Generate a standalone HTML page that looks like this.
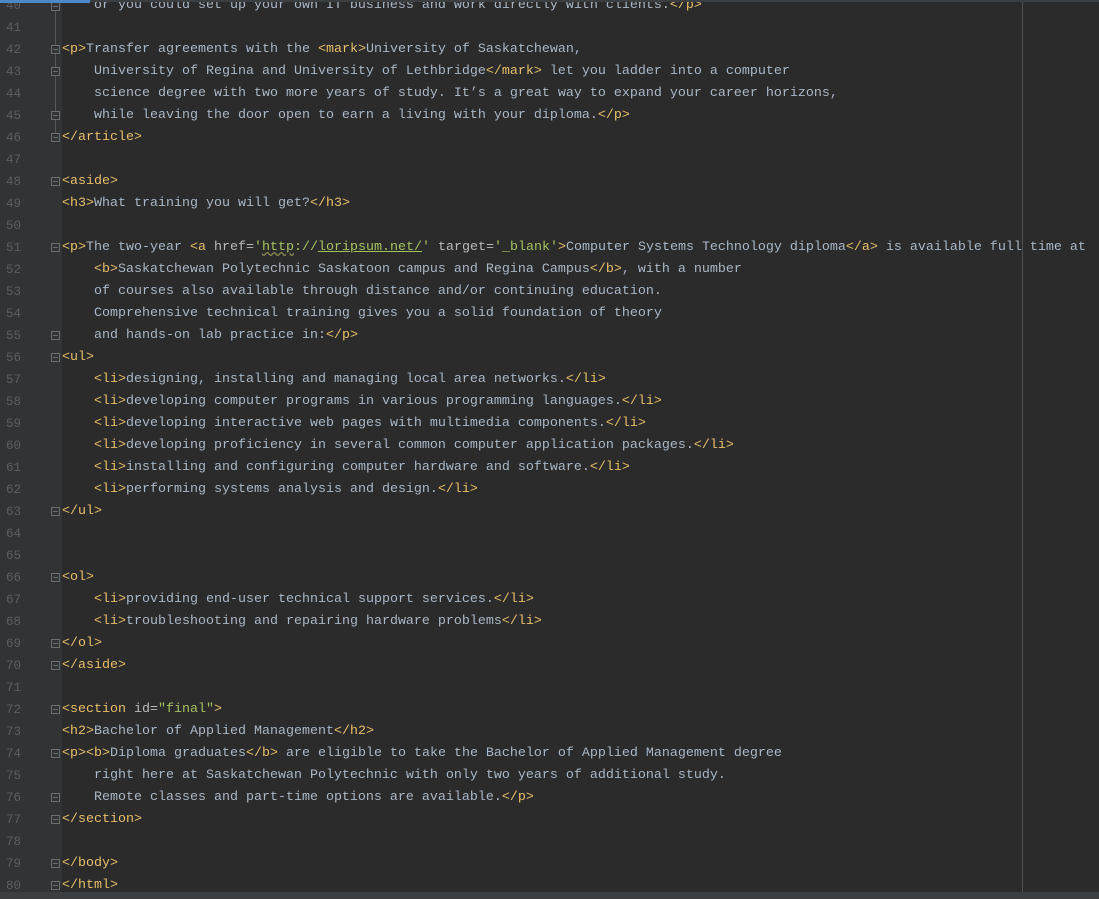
<!DOCTYPE html>
<html><head><meta charset="utf-8"><style>
html,body{margin:0;padding:0;}
body{width:1099px;height:899px;background:#2b2b2b;position:relative;overflow:hidden;font-family:"Liberation Mono",monospace;font-size:13.33px;}
.gutter{position:absolute;left:0;top:0;width:62px;height:892px;background:#313335;}
.topbar{position:absolute;left:0;top:0;width:90px;height:3px;background:#4a88c7;}
.topbar2{position:absolute;left:90px;top:0;width:1009px;height:2px;background:#3c3f41;}
.margin{position:absolute;left:1022px;top:0;width:1px;height:892px;background:#4e5254;}
.bottom{position:absolute;left:0;top:892px;width:1099px;height:7px;background:#3c3f41;}
.nums{position:absolute;left:0;top:-5px;width:40px;color:#5c5f62;line-height:22px;font-size:12.5px;}
.nums div{height:22px;padding-left:6px;}
.code{position:absolute;left:62px;top:-5px;line-height:22px;color:#a9b7c6;}
.code div{height:22px;white-space:pre;}
.t{color:#e8bf6a}.a{color:#bababa}.v{color:#a5c261}.u{text-decoration:underline;text-decoration-style:wavy;text-decoration-color:#8a8a55}
.f{position:absolute;left:51px;width:9px;height:9px;box-sizing:border-box;border:1px solid #6b6e70;background:#313335;margin-top:2px;}
.f::after{content:"";position:absolute;left:1px;top:3px;width:5px;height:1px;background:#6b6e70;}
</style></head><body>
<div class="gutter"></div>
<div class="margin"></div>
<div class="nums"><div>40</div><div>41</div><div>42</div><div>43</div><div>44</div><div>45</div><div>46</div><div>47</div><div>48</div><div>49</div><div>50</div><div>51</div><div>52</div><div>53</div><div>54</div><div>55</div><div>56</div><div>57</div><div>58</div><div>59</div><div>60</div><div>61</div><div>62</div><div>63</div><div>64</div><div>65</div><div>66</div><div>67</div><div>68</div><div>69</div><div>70</div><div>71</div><div>72</div><div>73</div><div>74</div><div>75</div><div>76</div><div>77</div><div>78</div><div>79</div><div>80</div></div>
<div class="code"><div>    or you could set up your own IT business and work directly with clients.<span class="t">&lt;/p&gt;</span></div><div></div><div><span class="t">&lt;p&gt;</span>Transfer agreements with the <span class="t">&lt;mark&gt;</span>University of Saskatchewan,</div><div>    University of Regina and University of Lethbridge<span class="t">&lt;/mark&gt;</span> let you ladder into a computer</div><div>    science degree with two more years of study. It’s a great way to expand your career horizons,</div><div>    while leaving the door open to earn a living with your diploma.<span class="t">&lt;/p&gt;</span></div><div><span class="t">&lt;/article&gt;</span></div><div></div><div><span class="t">&lt;aside&gt;</span></div><div><span class="t">&lt;h3&gt;</span>What training you will get?<span class="t">&lt;/h3&gt;</span></div><div></div><div><span class="t">&lt;p&gt;</span>The two-year <span class="t">&lt;a </span><span class="a">href=</span><span class="v">'<span class="u">http</span>://<span style="text-decoration:underline">loripsum.net/</span>'</span> <span class="a">target=</span><span class="v">'_blank'</span><span class="t">&gt;</span>Computer Systems Technology diploma<span class="t">&lt;/a&gt;</span> is available full time at</div><div>    <span class="t">&lt;b&gt;</span>Saskatchewan Polytechnic Saskatoon campus and Regina Campus<span class="t">&lt;/b&gt;</span>, with a number</div><div>    of courses also available through distance and/or continuing education.</div><div>    Comprehensive technical training gives you a solid foundation of theory</div><div>    and hands-on lab practice in:<span class="t">&lt;/p&gt;</span></div><div><span class="t">&lt;ul&gt;</span></div><div>    <span class="t">&lt;li&gt;</span>designing, installing and managing local area networks.<span class="t">&lt;/li&gt;</span></div><div>    <span class="t">&lt;li&gt;</span>developing computer programs in various programming languages.<span class="t">&lt;/li&gt;</span></div><div>    <span class="t">&lt;li&gt;</span>developing interactive web pages with multimedia components.<span class="t">&lt;/li&gt;</span></div><div>    <span class="t">&lt;li&gt;</span>developing proficiency in several common computer application packages.<span class="t">&lt;/li&gt;</span></div><div>    <span class="t">&lt;li&gt;</span>installing and configuring computer hardware and software.<span class="t">&lt;/li&gt;</span></div><div>    <span class="t">&lt;li&gt;</span>performing systems analysis and design.<span class="t">&lt;/li&gt;</span></div><div><span class="t">&lt;/ul&gt;</span></div><div></div><div></div><div><span class="t">&lt;ol&gt;</span></div><div>    <span class="t">&lt;li&gt;</span>providing end-user technical support services.<span class="t">&lt;/li&gt;</span></div><div>    <span class="t">&lt;li&gt;</span>troubleshooting and repairing hardware problems<span class="t">&lt;/li&gt;</span></div><div><span class="t">&lt;/ol&gt;</span></div><div><span class="t">&lt;/aside&gt;</span></div><div></div><div><span class="t">&lt;section </span><span class="a">id=</span><span class="v">"final"</span><span class="t">&gt;</span></div><div><span class="t">&lt;h2&gt;</span>Bachelor of Applied Management<span class="t">&lt;/h2&gt;</span></div><div><span class="t">&lt;p&gt;&lt;b&gt;</span>Diploma graduates<span class="t">&lt;/b&gt;</span> are eligible to take the Bachelor of Applied Management degree</div><div>    right here at Saskatchewan Polytechnic with only two years of additional study.</div><div>    Remote classes and part-time options are available.<span class="t">&lt;/p&gt;</span></div><div><span class="t">&lt;/section&gt;</span></div><div></div><div><span class="t">&lt;/body&gt;</span></div><div><span class="t">&lt;/html&gt;</span></div></div>
<div style="position:absolute;left:55px;top:0;width:1px;height:136px;background:#555759"></div>
<div class="f" style="top:0px"></div>
<div class="f" style="top:43px"></div>
<div class="f" style="top:65px"></div>
<div class="f" style="top:109px"></div>
<div class="f" style="top:131px"></div>
<div class="f" style="top:175px"></div>
<div class="f" style="top:241px"></div>
<div class="f" style="top:329px"></div>
<div class="f" style="top:351px"></div>
<div class="f" style="top:505px"></div>
<div class="f" style="top:571px"></div>
<div class="f" style="top:637px"></div>
<div class="f" style="top:659px"></div>
<div class="f" style="top:703px"></div>
<div class="f" style="top:747px"></div>
<div class="f" style="top:791px"></div>
<div class="f" style="top:813px"></div>
<div class="f" style="top:857px"></div>
<div class="f" style="top:879px"></div>
<div class="topbar"></div><div class="topbar2"></div>
<div class="bottom"></div>
</body></html>
